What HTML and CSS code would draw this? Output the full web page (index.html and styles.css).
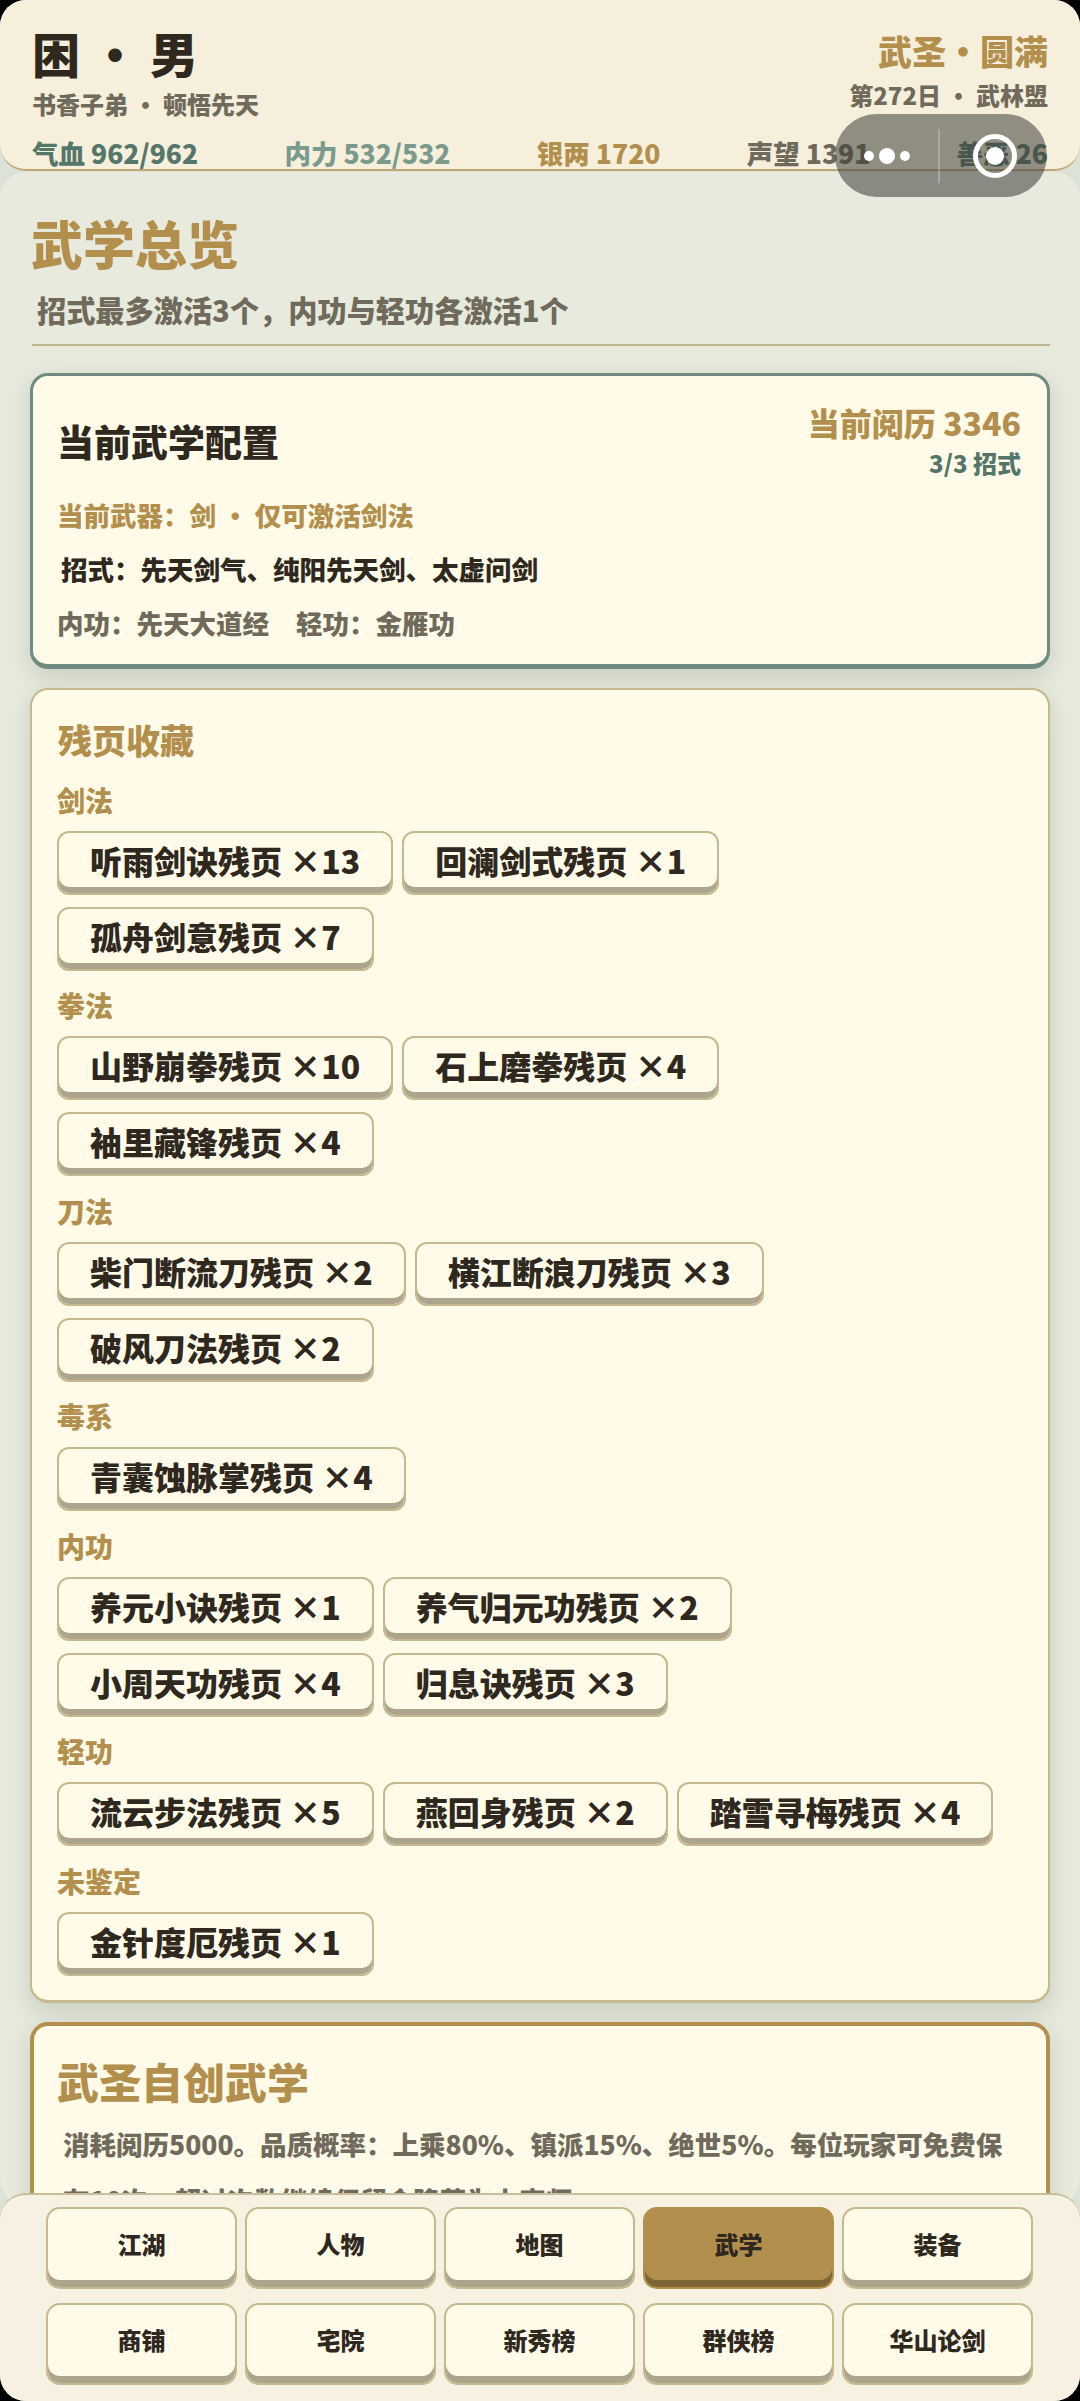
FILE: index.html
```html
<!DOCTYPE html>
<html lang="zh">
<head>
<meta charset="utf-8">
<title>武学总览</title>
<link rel="stylesheet" href="styles.css">
</head>
<body>
<div class="app">
  <header class="top">
    <div class="top-row">
      <div>
        <div class="name">困 • 男</div>
        <div class="origin">书香子弟 • 顿悟先天</div>
      </div>
      <div class="top-right">
        <div class="rank">武圣•圆满</div>
        <div class="day">第272日 • 武林盟</div>
      </div>
    </div>
    <div class="stats">
      <span class="c-green">气血 962/962</span>
      <span class="c-sage">内力 532/532</span>
      <span class="c-gold">银两 1720</span>
      <span class="c-grey">声望 1391</span>
      <span class="c-green">善恶 26</span>
    </div>
  </header>

  <main class="panel">
    <h1 class="page-title">武学总览</h1>
    <p class="page-sub">招式最多激活3个，内功与轻功各激活1个</p>
    <div class="rule"></div>

    <section class="card card-config">
      <div class="config-head">
        <h2 class="config-title">当前武学配置</h2>
        <div class="config-side">
          <div class="exp">当前阅历 3346</div>
          <div class="slots">3/3 招式</div>
        </div>
      </div>
      <div class="line c-gold">当前武器：剑 • 仅可激活剑法</div>
      <div class="line line-in c-dark">招式：先天剑气、纯阳先天剑、太虚问剑</div>
      <div class="line line-pair c-grey"><span>内功：先天大道经</span><span>轻功：金雁功</span></div>
    </section>

    <section class="card card-pages">
      <h3 class="pages-title">残页收藏</h3>

      <div class="group-label">剑法</div>
      <div class="chips">
        <span class="chip">听雨剑诀残页 ×13</span>
        <span class="chip">回澜剑式残页 ×1</span>
        <span class="chip">孤舟剑意残页 ×7</span>
      </div>

      <div class="group-label">拳法</div>
      <div class="chips">
        <span class="chip">山野崩拳残页 ×10</span>
        <span class="chip">石上磨拳残页 ×4</span>
        <span class="chip">袖里藏锋残页 ×4</span>
      </div>

      <div class="group-label">刀法</div>
      <div class="chips">
        <span class="chip">柴门断流刀残页 ×2</span>
        <span class="chip">横江断浪刀残页 ×3</span>
        <span class="chip">破风刀法残页 ×2</span>
      </div>

      <div class="group-label">毒系</div>
      <div class="chips">
        <span class="chip">青囊蚀脉掌残页 ×4</span>
      </div>

      <div class="group-label">内功</div>
      <div class="chips">
        <span class="chip">养元小诀残页 ×1</span>
        <span class="chip">养气归元功残页 ×2</span>
        <span class="chip">小周天功残页 ×4</span>
        <span class="chip">归息诀残页 ×3</span>
      </div>

      <div class="group-label">轻功</div>
      <div class="chips">
        <span class="chip">流云步法残页 ×5</span>
        <span class="chip">燕回身残页 ×2</span>
        <span class="chip">踏雪寻梅残页 ×4</span>
      </div>

      <div class="group-label">未鉴定</div>
      <div class="chips">
        <span class="chip">金针度厄残页 ×1</span>
      </div>
    </section>

    <section class="card card-create">
      <h2 class="create-title">武圣自创武学</h2>
      <p class="create-text">消耗阅历5000。品质概率：上乘80%、镇派15%、绝世5%。每位玩家可免费保有10次；超过次数继续保留会降落为上宗师</p>
    </section>
  </main>

  <nav class="nav">
    <button class="nav-btn">江湖</button>
    <button class="nav-btn">人物</button>
    <button class="nav-btn">地图</button>
    <button class="nav-btn nav-btn-on">武学</button>
    <button class="nav-btn">装备</button>
    <button class="nav-btn">商铺</button>
    <button class="nav-btn">宅院</button>
    <button class="nav-btn">新秀榜</button>
    <button class="nav-btn">群侠榜</button>
    <button class="nav-btn">华山论剑</button>
  </nav>

  <div class="capsule">
    <div class="capsule-dots"><i class="dot"></i><i class="dot dot-big"></i><i class="dot"></i></div>
    <div class="capsule-sep"></div>
    <div class="capsule-ring"><i class="ring-core"></i></div>
  </div>
</div>
</body>
</html>
```
FILE: styles.css
```css
* { box-sizing: border-box; }
html, body { margin: 0; padding: 0; background: #000; }
body {
  width: 1080px;
  height: 2401px;
  overflow: hidden;
  font-family: "Noto Sans CJK SC", "Noto Sans", sans-serif;
  font-weight: 900;
}
.app {
  position: relative;
  width: 1080px;
  height: 2401px;
  border-radius: 26px;
  overflow: hidden;
  background: #dde2d8;
  display: flex;
  flex-direction: column;
}
.c-green { color: #55766a; }
.c-sage { color: #7b9a8e; }
.c-gold { color: #b38f4d; }
.c-grey { color: #6f6a5b; }
.c-dark { color: #2f281f; }

/* header */
.top {
  flex: none;
  height: 171px;
  padding: 16px 32px 0 32px;
  background: #f6efdc;
  border-bottom: 2px solid #bfa878;
  border-radius: 0 0 26px 26px;
}
.top-row { display: flex; justify-content: space-between; }
.name { font-size: 48px; line-height: 72px; color: #2f281f; }
.origin { font-size: 24px; line-height: 32px; color: #6f6a5b; }
.top-right { text-align: right; padding-top: 13px; }
.rank { font-size: 34px; line-height: 44px; color: #b38f4d; }
.day { font-size: 24px; line-height: 32px; margin-top: 6px; color: #6f6a5b; }
.stats {
  display: flex;
  justify-content: space-between;
  font-size: 26.5px;
  line-height: 36px;
  margin-top: 15px;
}

/* panel */
.panel {
  flex: 1;
  min-height: 0;
  margin: 1px 0 -12px;
  padding: 35px 30px 0 30px;
  background: #e7eadd;
  border-radius: 26px;
  overflow: hidden;
}
.page-title { margin: 0; padding-left: 1px; font-size: 52px; line-height: 72px; color: #b38f4d; font-weight: 900; }
.page-sub { margin: 10px 0 0; padding-left: 7px; font-size: 29.2px; line-height: 40px; color: #6f6a5b; }
.rule { height: 2px; margin: 15px 0 0 2px; background: #bfb492; }

.card {
  background: #fffbe8;
  border-radius: 18px;
  box-shadow: 0 8px 22px rgba(90, 110, 95, .22);
}
.card-config {
  margin-top: 27px;
  height: 296px;
  padding: 24px 26px 0 24px;
  border: 3px solid #6f8a7e;
  border-bottom-width: 5px;
}
.config-head { display: flex; justify-content: space-between; }
.config-title { margin: 16px 0 0; font-size: 37px; line-height: 50px; color: #2f281f; font-weight: 900; }
.exp { font-size: 32px; line-height: 44px; color: #b38f4d; text-align: right; }
.slots { font-size: 24px; line-height: 34px; margin-top: 2px; color: #55766a; text-align: right; }
.line { font-size: 26.5px; line-height: 54px; }
.config-head + .line { margin-top: 8px; }
.line-in { padding-left: 4px; }
.line-pair { display: flex; gap: 27px; }

.card-pages {
  margin-top: 19px;
  height: 1315px;
  padding: 29px 25px 0 25px;
  border: 2px solid #c6b88f;
  border-bottom-width: 3px;
}
.pages-title { margin: 0; padding: 0 0 4px 1px; font-size: 34px; line-height: 42px; color: #b38f4d; font-weight: 900; }
.group-label { font-size: 28px; line-height: 40px; margin-top: 14.5px; color: #b38f4d; }
.chips { display: flex; flex-wrap: wrap; gap: 12px 9px; margin-top: 11px; }
.chip {
  height: 64px;
  padding: 0 31px 6px;
  display: inline-flex;
  align-items: center;
  font-size: 32px;
  color: #2f281f;
  background: #fffbe8;
  border: 2px solid #c6b88f;
  border-radius: 12px;
  box-shadow: inset 0 -6px 0 #aca48c;
}

.card-create {
  margin-top: 19px;
  height: 400px;
  padding: 25px 23px 0 23px;
  border: 4px solid #b38f4d;
}
.create-title { margin: 0; font-size: 42px; line-height: 60px; color: #b38f4d; font-weight: 900; }
.create-text { margin: 5px 0 0; padding-left: 6px; font-size: 26.5px; line-height: 56px; color: #6f6a5b; }

/* nav */
.nav {
  position: relative;
  flex: none;
  height: 208px;
  padding: 12px 46px 0;
  display: grid;
  grid-template-columns: repeat(5, 191px);
  grid-auto-rows: 82px;
  gap: 14px 8px;
  background: #f6f1e0;
  border-top: 2px solid #c9bd9a;
  border-radius: 26px 26px 0 0;
}
.nav-btn {
  padding: 0 0 10px;
  font: inherit;
  font-size: 24px;
  color: #2f281f;
  background: #fffbe8;
  border: 2px solid #c6b88f;
  border-radius: 14px;
  box-shadow: inset 0 -7px 0 #aca48c;
}
.nav-btn-on {
  background: #b38f4d;
  border-color: #b38f4d;
  box-shadow: inset 0 -7px 0 #7d6536;
}

/* capsule overlay */
.capsule {
  position: absolute;
  left: 835px;
  top: 114px;
  width: 212px;
  height: 83px;
  display: flex;
  align-items: center;
  border-radius: 42px;
  background: rgba(60, 60, 55, .55);
}
.capsule-dots {
  width: 103px;
  display: flex;
  justify-content: center;
  align-items: center;
  gap: 5px;
}
.dot { width: 10px; height: 10px; border-radius: 50%; background: #fff; }
.dot-big { width: 16px; height: 16px; }
.capsule-sep { width: 2px; height: 54px; background: rgba(255, 255, 255, .25); }
.capsule-ring {
  margin-left: 33px;
  width: 44px;
  height: 44px;
  border: 5px solid #fff;
  border-radius: 50%;
  display: flex;
  align-items: center;
  justify-content: center;
}
.ring-core { width: 18px; height: 18px; border-radius: 50%; background: #fff; }
```
